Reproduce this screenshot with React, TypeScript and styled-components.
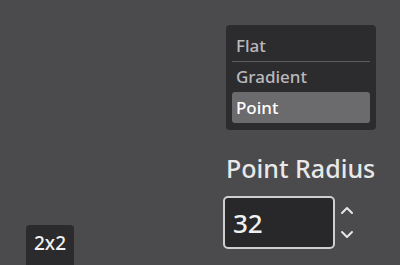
import React from "react";
import styled, { createGlobalStyle } from "styled-components";

const GlobalStyle = createGlobalStyle`
  html, body {
    margin: 0;
    padding: 0;
    background: #4b4a4d;
    font-family: "Noto Sans", "Open Sans", sans-serif;
    font-weight: 500;
    color: #e0e0e0;
  }
`;

const Screen = styled.div`
  width: 400px;
  height: 265px;
  overflow: hidden;
  display: grid;
  grid-template-columns: 200px 1fr;
`;

const Side = styled.div`
  display: flex;
  align-items: flex-end;
  padding-left: 26px;
`;

const SizeBadge = styled.div`
  width: 48px;
  height: 44px;
  margin-bottom: -4px;
  box-sizing: border-box;
  padding-top: 5px;
  background: #2b2a2d;
  border-radius: 4px;
  font-size: 19px;
  line-height: 26px;
  color: #f2f2f2;
  text-align: center;
`;

const Right = styled.div`
  display: flex;
  flex-direction: column;
  padding-top: 25px;
`;

const Menu = styled.div`
  margin-left: 26px;
  width: 150px;
  height: 105px;
  box-sizing: border-box;
  padding: 6px;
  background: #2c2b2e;
  border-radius: 4px;
  display: flex;
  flex-direction: column;
`;

const Item = styled.div<{ $active?: boolean }>`
  height: ${(p) => (p.$active ? 31 : 30)}px;
  line-height: ${(p) => (p.$active ? 31 : 30)}px;
  padding-left: 4px;
  font-size: 17px;
  color: ${(p) => (p.$active ? "#ffffff" : "#b9b9bb")};
  background: ${(p) => (p.$active ? "#6b6a6d" : "transparent")};
  border-radius: 3px;
`;

const Sep = styled.div`
  height: 1px;
  background: #5c5b5e;
`;

const Label = styled.div`
  margin-top: 21px;
  margin-left: 26px;
  font-size: 25px;
  line-height: 34px;
  color: #e8e8e8;
`;

const SpinRow = styled.div`
  margin-top: 11px;
  margin-left: 23px;
  display: flex;
  align-items: center;
  gap: 5px;
`;

const SpinField = styled.div`
  width: 112px;
  height: 53px;
  box-sizing: border-box;
  border: 2px solid #cfcfd0;
  border-radius: 5px;
  background: #28272a;
  padding-left: 8px;
  font-size: 26px;
  line-height: 51px;
  color: #f0f0f0;
`;

const Arrows = styled.div`
  display: flex;
  flex-direction: column;
  gap: 15px;
`;

export default function App() {
  return (
    <>
      <GlobalStyle />
      <Screen>
        <Side>
          <SizeBadge>2x2</SizeBadge>
        </Side>
        <Right>
          <Menu>
            <Item>Flat</Item>
            <Sep />
            <Item>Gradient</Item>
            <Item $active>Point</Item>
          </Menu>
          <Label>Point Radius</Label>
          <SpinRow>
            <SpinField>32</SpinField>
            <Arrows>
              <svg width="14" height="10" viewBox="0 0 14 10">
                <path d="M2 8 L7 3 L12 8" fill="none" stroke="#e6e6e6" strokeWidth="2" strokeLinecap="round" strokeLinejoin="round" />
              </svg>
              <svg width="14" height="10" viewBox="0 0 14 10">
                <path d="M2 2 L7 7 L12 2" fill="none" stroke="#e6e6e6" strokeWidth="2" strokeLinecap="round" strokeLinejoin="round" />
              </svg>
            </Arrows>
          </SpinRow>
        </Right>
      </Screen>
    </>
  );
}
